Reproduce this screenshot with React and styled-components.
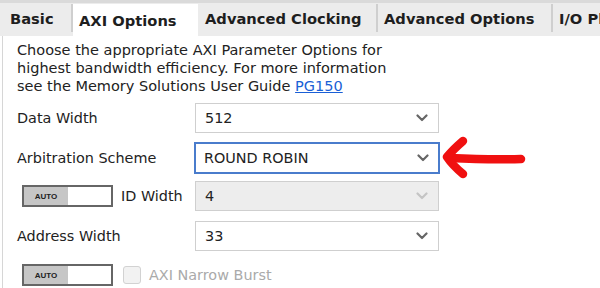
import React from "react";
import styled, { createGlobalStyle } from "styled-components";

const Global = createGlobalStyle`
  html, body { margin: 0; padding: 0; background: #fff; }
  body { font-family: "DejaVu Sans", Verdana, sans-serif; color: #222; }
`;

const Page = styled.div`
  width: 600px;
  height: 288px;
  overflow: hidden;
  position: relative;
  border-top: 3px solid #dadada;
  box-sizing: border-box;
`;

const TabBar = styled.div`
  display: flex;
  height: 33px;
  background: #ececec;
  padding-top: 1px;
  box-sizing: border-box;
  white-space: nowrap;
  overflow: hidden;
`;

const Tab = styled.div`
  flex: none;
  width: ${(p) => p.$w}px;
  box-sizing: border-box;
  padding-left: ${(p) => p.$pl || 6}px;
  display: flex;
  align-items: center;
  font-weight: bold;
  font-size: 14.7px;
  color: #1e1e1e;
  background: ${(p) => (p.$active ? "#fff" : "transparent")};
  border-right: ${(p) => (p.$sep ? "2px solid #cfcfcf" : "none")};
  margin-bottom: ${(p) => (p.$active ? "0" : "4px")};
  overflow: hidden;
`;

const Body = styled.div`
  margin-left: 2px;
  border-left: 1px solid #d6d6d6;
  padding: 5px 0 0 14px;
  height: 260px;
  box-sizing: border-box;
`;

const Desc = styled.p`
  margin: 0;
  font-size: 14.5px;
  line-height: 18px;
  color: #222;
`;

const Link = styled.a`
  color: #1a5fd6;
  text-decoration: underline;
`;

const Row = styled.div`
  display: flex;
  align-items: center;
  height: ${(p) => p.$h || 30}px;
  margin-top: ${(p) => p.$mt}px;
`;

const Label = styled.div`
  width: 178px;
  flex: none;
  font-size: 14.4px;
  color: #222;
`;

const LeadGroup = styled.div`
  width: ${(p) => (p.$free ? "auto" : "178px")};
  flex: none;
  display: flex;
  align-items: center;
  padding-left: 5px;
  box-sizing: border-box;
  gap: 8px;
  font-size: 14.4px;
  white-space: nowrap;
`;

const SelectBox = styled.div`
  width: ${(p) => (p.$focus ? 246 : 244)}px;
  height: ${(p) => (p.$focus ? 32 : 30)}px;
  margin-left: ${(p) => (p.$focus ? -1 : 0)}px;
  box-sizing: border-box;
  border: ${(p) => (p.$focus ? "2px solid #4a7ccc" : "1px solid #cfcfcf")};
  background: ${(p) => (p.$disabled ? "#ededed" : "#fff")};
  display: flex;
  align-items: center;
  justify-content: space-between;
  padding: 0 ${(p) => (p.$focus ? 9 : 10)}px 0 ${(p) => (p.$focus ? 8 : 9)}px;
  font-size: 14.4px;
  color: #222;
`;

const Toggle = styled.div`
  width: 91px;
  height: 22px;
  box-sizing: border-box;
  border: 2px solid #666;
  background: #fff;
  display: flex;
  flex: none;
`;

const ToggleKnob = styled.div`
  width: 44px;
  background: #c6c6c6;
  display: flex;
  align-items: center;
  justify-content: center;
  font-size: 8px;
  font-weight: bold;
  color: #222;
  font-family: "Liberation Sans", Arial, sans-serif;
`;

const Check = styled.div`
  width: 16px;
  height: 16px;
  border: 1px solid #d2d2d2;
  border-radius: 3px;
  background: #f2f2f2;
  flex: none;
  margin-left: 2px;
`;

const CheckLabel = styled.span`
  color: #aaa;
  font-size: 14.4px;
`;

const Arrow = styled.svg`
  position: absolute;
  left: 440px;
  top: 132px;
  width: 92px;
  height: 48px;
  overflow: visible;
`;

const Chevron = ({ light }) => (
  <svg width="12" height="8" viewBox="0 0 12 8">
    <path d="M1.5 1.5 L6 6 L10.5 1.5" fill="none" stroke={light ? "#c4c4c4" : "#666"} strokeWidth="2.2" strokeLinecap="round" strokeLinejoin="round" />
  </svg>
);

const Select = ({ value, focus, disabled }) => (
  <SelectBox $focus={focus} $disabled={disabled}>
    <span>{value}</span>
    <Chevron light={disabled} />
  </SelectBox>
);

export default function App() {
  return (
    <>
      <Global />
      <Page>
        <TabBar>
          <Tab $w={73} $pl={10} $sep>Basic</Tab>
          <Tab $w={125} $active>AXI Options</Tab>
          <Tab $w={180} $pl={7} $sep>Advanced Clocking</Tab>
          <Tab $w={175} $sep>Advanced Options</Tab>
          <Tab $w={60} $pl={6}>I/O Planning</Tab>
        </TabBar>
        <Body>
          <Desc>
            Choose the appropriate AXI Parameter Options for
            <br />
            highest bandwidth efficiency. For more information
            <br />
            see the Memory Solutions User Guide <Link>PG150</Link>
          </Desc>
          <Row $mt={8}>
            <Label>Data Width</Label>
            <Select value="512" />
          </Row>
          <Row $mt={9} $h={32}>
            <Label>Arbitration Scheme</Label>
            <Select value="ROUND ROBIN" focus />
          </Row>
          <Row $mt={7}>
            <LeadGroup>
              <Toggle>
                <ToggleKnob>AUTO</ToggleKnob>
              </Toggle>
              <span>ID Width</span>
            </LeadGroup>
            <Select value="4" disabled />
          </Row>
          <Row $mt={10}>
            <Label>Address Width</Label>
            <Select value="33" />
          </Row>
          <Row $mt={13} $h={22}>
            <LeadGroup $free>
              <Toggle>
                <ToggleKnob>AUTO</ToggleKnob>
              </Toggle>
              <Check />
              <CheckLabel>AXI Narrow Burst</CheckLabel>
            </LeadGroup>
          </Row>
        </Body>
        <Arrow viewBox="0 0 92 48">
          <g fill="none" stroke="#f01010" strokeWidth="8.5" strokeLinecap="round" strokeLinejoin="round">
            <path d="M9 23 C 30 24, 55 25, 81 24" />
            <path d="M23 6 C 16 12, 11 17, 7 22 C 11 28, 17 34, 23 39" />
          </g>
        </Arrow>
      </Page>
    </>
  );
}
